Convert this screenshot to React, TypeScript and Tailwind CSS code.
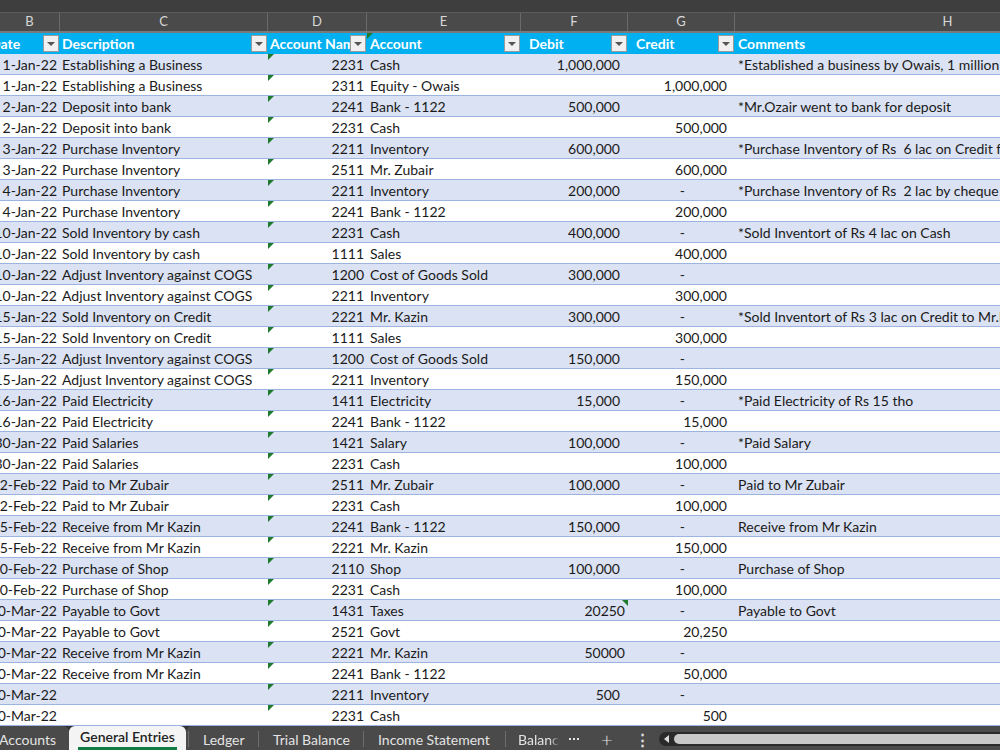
import React from 'react';

type Row = {
  date: string;
  desc: string;
  code: string;
  account: string;
  debit?: string;
  credit?: string;
  comment?: string;
  rawDebit?: boolean;
};

const ROWS: Row[] = [
  { date: '1-Jan-22', desc: 'Establishing a Business', code: '2231', account: 'Cash', debit: '1,000,000', comment: '*Established a business by Owais, 1 million' },
  { date: '1-Jan-22', desc: 'Establishing a Business', code: '2311', account: 'Equity - Owais', credit: '1,000,000' },
  { date: '2-Jan-22', desc: 'Deposit into bank', code: '2241', account: 'Bank - 1122', debit: '500,000', comment: '*Mr.Ozair went to bank for deposit' },
  { date: '2-Jan-22', desc: 'Deposit into bank', code: '2231', account: 'Cash', credit: '500,000' },
  { date: '3-Jan-22', desc: 'Purchase Inventory', code: '2211', account: 'Inventory', debit: '600,000', comment: '*Purchase Inventory of Rs  6 lac on Credit from Mr. Zubair' },
  { date: '3-Jan-22', desc: 'Purchase Inventory', code: '2511', account: 'Mr. Zubair', credit: '600,000' },
  { date: '4-Jan-22', desc: 'Purchase Inventory', code: '2211', account: 'Inventory', debit: '200,000', credit: '-', comment: '*Purchase Inventory of Rs  2 lac by cheque through bank' },
  { date: '4-Jan-22', desc: 'Purchase Inventory', code: '2241', account: 'Bank - 1122', credit: '200,000' },
  { date: '10-Jan-22', desc: 'Sold Inventory by cash', code: '2231', account: 'Cash', debit: '400,000', credit: '-', comment: '*Sold Inventort of Rs 4 lac on Cash' },
  { date: '10-Jan-22', desc: 'Sold Inventory by cash', code: '1111', account: 'Sales', credit: '400,000' },
  { date: '10-Jan-22', desc: 'Adjust Inventory against COGS', code: '1200', account: 'Cost of Goods Sold', debit: '300,000', credit: '-' },
  { date: '10-Jan-22', desc: 'Adjust Inventory against COGS', code: '2211', account: 'Inventory', credit: '300,000' },
  { date: '15-Jan-22', desc: 'Sold Inventory on Credit', code: '2221', account: 'Mr. Kazin', debit: '300,000', credit: '-', comment: '*Sold Inventort of Rs 3 lac on Credit to Mr.Kazin' },
  { date: '15-Jan-22', desc: 'Sold Inventory on Credit', code: '1111', account: 'Sales', credit: '300,000' },
  { date: '15-Jan-22', desc: 'Adjust Inventory against COGS', code: '1200', account: 'Cost of Goods Sold', debit: '150,000', credit: '-' },
  { date: '15-Jan-22', desc: 'Adjust Inventory against COGS', code: '2211', account: 'Inventory', credit: '150,000' },
  { date: '16-Jan-22', desc: 'Paid Electricity', code: '1411', account: 'Electricity', debit: '15,000', credit: '-', comment: '*Paid Electricity of Rs 15 tho' },
  { date: '16-Jan-22', desc: 'Paid Electricity', code: '2241', account: 'Bank - 1122', credit: '15,000' },
  { date: '30-Jan-22', desc: 'Paid Salaries', code: '1421', account: 'Salary', debit: '100,000', credit: '-', comment: '*Paid Salary' },
  { date: '30-Jan-22', desc: 'Paid Salaries', code: '2231', account: 'Cash', credit: '100,000' },
  { date: '2-Feb-22', desc: 'Paid to Mr Zubair', code: '2511', account: 'Mr. Zubair', debit: '100,000', credit: '-', comment: 'Paid to Mr Zubair' },
  { date: '2-Feb-22', desc: 'Paid to Mr Zubair', code: '2231', account: 'Cash', credit: '100,000' },
  { date: '5-Feb-22', desc: 'Receive from Mr Kazin', code: '2241', account: 'Bank - 1122', debit: '150,000', credit: '-', comment: 'Receive from Mr Kazin' },
  { date: '5-Feb-22', desc: 'Receive from Mr Kazin', code: '2221', account: 'Mr. Kazin', credit: '150,000' },
  { date: '10-Feb-22', desc: 'Purchase of Shop', code: '2110', account: 'Shop', debit: '100,000', credit: '-', comment: 'Purchase of Shop' },
  { date: '10-Feb-22', desc: 'Purchase of Shop', code: '2231', account: 'Cash', credit: '100,000' },
  { date: '30-Mar-22', desc: 'Payable to Govt', code: '1431', account: 'Taxes', debit: '20250', rawDebit: true, credit: '-', comment: 'Payable to Govt' },
  { date: '30-Mar-22', desc: 'Payable to Govt', code: '2521', account: 'Govt', credit: '20,250' },
  { date: '30-Mar-22', desc: 'Receive from Mr Kazin', code: '2221', account: 'Mr. Kazin', debit: '50000', rawDebit: true, credit: '-' },
  { date: '30-Mar-22', desc: 'Receive from Mr Kazin', code: '2241', account: 'Bank - 1122', credit: '50,000' },
  { date: '30-Mar-22', desc: '', code: '2211', account: 'Inventory', debit: '500', credit: '-' },
  { date: '30-Mar-22', desc: '', code: '2231', account: 'Cash', credit: '500' },
];

const COLS = 'grid grid-cols-[60px_208px_99px_154px_107px_107px_265px]';

function Flag({ right, top = 'top-0' }: { right?: boolean; top?: string }) {
  return (
    <span
      className={`absolute ${top} h-0 w-0 border-t-[6px] border-t-[#1f7a2e] ${
        right ? 'right-0 border-l-[6px] border-l-transparent' : 'left-0 border-r-[6px] border-r-transparent'
      }`}
    />
  );
}

function FilterBtn() {
  return (
    <span className="absolute right-[1px] top-[2px] flex h-[17px] w-[16px] items-center justify-center border border-[#9a9a9a] bg-[#f0f0f0]">
      <span className="h-0 w-0 border-x-[4px] border-t-[4px] border-x-transparent border-t-[#555]" />
    </span>
  );
}

function HeaderCell({ label, pl = 'pl-[2px]', flag }: { label: string; pl?: string; flag?: boolean }) {
  return (
    <div className={`relative h-full overflow-hidden whitespace-nowrap ${pl}`}>
      {flag && <Flag />}
      {label}
      <FilterBtn />
    </div>
  );
}

function Sep() {
  return <span className="h-[16px] w-px shrink-0 bg-[#6e6e6e]" />;
}

export default function App() {
  const letters = [
    { l: 'B', w: 'w-[60px]' },
    { l: 'C', w: 'w-[208px]' },
    { l: 'D', w: 'w-[99px]' },
    { l: 'E', w: 'w-[154px]' },
    { l: 'F', w: 'w-[107px]' },
    { l: 'G', w: 'w-[107px]' },
    { l: 'H', w: 'w-[426px]' },
  ];

  return (
    <div className="flex h-[750px] w-[1000px] flex-col overflow-hidden bg-white font-['Lato','Open_Sans',sans-serif] text-[14px] text-[#1a1a1a]">
      {/* top strip */}
      <div className="h-[13px] shrink-0 border-b border-[#5c5c5c] bg-[#3e3e3e]" />

      {/* column letters */}
      <div className="flex h-[20px] shrink-0 border-b-2 border-[#7a7a7a] bg-[#4a4a4a] text-[13px] text-[#d8d8d8]">
        {letters.map((c) => (
          <div key={c.l} className={`${c.w} flex shrink-0 items-center justify-center border-r border-[#6a6a6a]`}>
            {c.l}
          </div>
        ))}
      </div>

      {/* table header */}
      <div className={`${COLS} h-[21px] shrink-0 bg-[#00b0f0] font-bold leading-[21px] text-white`}>
        <div className="relative h-full overflow-hidden whitespace-nowrap">
          <span className="absolute left-[-10px]">Date</span>
          <FilterBtn />
        </div>
        <HeaderCell label="Description" />
        <HeaderCell label="Account Name" />
        <HeaderCell label="Account" pl="pl-[3px]" flag />
        <HeaderCell label="Debit" pl="pl-[8px]" />
        <HeaderCell label="Credit" pl="pl-[8px]" />
        <div className="pl-[3px]">Comments</div>
      </div>

      {/* rows */}
      <div className="flex-1">
        {ROWS.map((r, i) => (
          <div
            key={i}
            className={`${COLS} h-[21px] items-start border-b border-[#9bb4e0] pt-[1px] leading-[20px] ${
              i % 2 === 0 ? 'bg-[#dae2f3]' : 'bg-white'
            }`}
          >
            <div className="flex justify-end overflow-hidden pr-[3px]">
              <span className="shrink-0 whitespace-nowrap">{r.date}</span>
            </div>
            <div className="overflow-hidden whitespace-nowrap pl-[2px]">{r.desc}</div>
            <div className="relative whitespace-nowrap pr-[3px] text-right">
              <Flag top="top-[-1px]" />
              {r.code}
            </div>
            <div className="whitespace-nowrap pl-[3px]">{r.account}</div>
            <div className={`relative whitespace-nowrap text-right ${r.rawDebit ? 'pr-[3px]' : 'pr-[8px]'}`}>
              {r.rawDebit && i === 26 && <Flag right top="top-[-1px]" />}
              {r.debit}
            </div>
            <div className="whitespace-nowrap pr-[8px] text-right">
              {r.credit === '-' ? <span className="pr-[42px]">-</span> : r.credit}
            </div>
            <div className="whitespace-pre pl-[3px]">{r.comment}</div>
          </div>
        ))}
      </div>

      {/* sheet tabs */}
      <div className="flex h-[24px] shrink-0 items-stretch bg-[#333333] text-[14px] text-[#e4e4e4]">
        <div className="flex w-[69px] items-center justify-end overflow-hidden whitespace-nowrap rounded-tr-[6px] bg-[#4a4a4a] pr-[13px] pt-[2px]">
          Accounts
        </div>
        <div className="relative flex w-[117px] items-center justify-center rounded-t-[6px] bg-[#f4f4f4] pb-[3px] font-semibold text-[#222]">
          General Entries
          <span className="absolute bottom-0 left-[9px] right-[9px] h-[3px] bg-[#107c41]" />
        </div>
        <div className="flex flex-1 items-center rounded-tl-[6px] bg-[#4a4a4a] pt-[2px]">
          <span className="ml-[2px]" />
          <Sep />
          <span className="w-[69px] whitespace-nowrap pl-[14px]">Ledger</span>
          <Sep />
          <span className="w-[104px] whitespace-nowrap pl-[14px]">Trial Balance</span>
          <Sep />
          <span className="w-[141px] whitespace-nowrap pl-[14px]">Income Statement</span>
          <Sep />
          <span className="w-[54px] overflow-hidden whitespace-nowrap pl-[12px] [mask-image:linear-gradient(to_right,black_80%,transparent)]">
            Balance
          </span>
          <span className="ml-[9px] flex gap-[2px]">
            <span className="h-[2px] w-[2px] bg-[#e4e4e4]" />
            <span className="h-[2px] w-[2px] bg-[#e4e4e4]" />
            <span className="h-[2px] w-[2px] bg-[#e4e4e4]" />
          </span>
          <span className="ml-[22px] text-[20px] font-light leading-none">+</span>
          <span className="ml-[22px] text-[15px] font-bold">⋮</span>
          <div className="ml-[9px] flex h-[14px] flex-1 items-center rounded-l-full bg-[#2a2a2a] pl-[5px]">
            <span className="h-0 w-0 border-y-[4px] border-r-[5px] border-y-transparent border-r-[#dcdcdc]" />
            <span className="ml-[5px] h-[10px] flex-1 rounded-l-full bg-[#c8c8c8]" />
          </div>
        </div>
      </div>
    </div>
  );
}
